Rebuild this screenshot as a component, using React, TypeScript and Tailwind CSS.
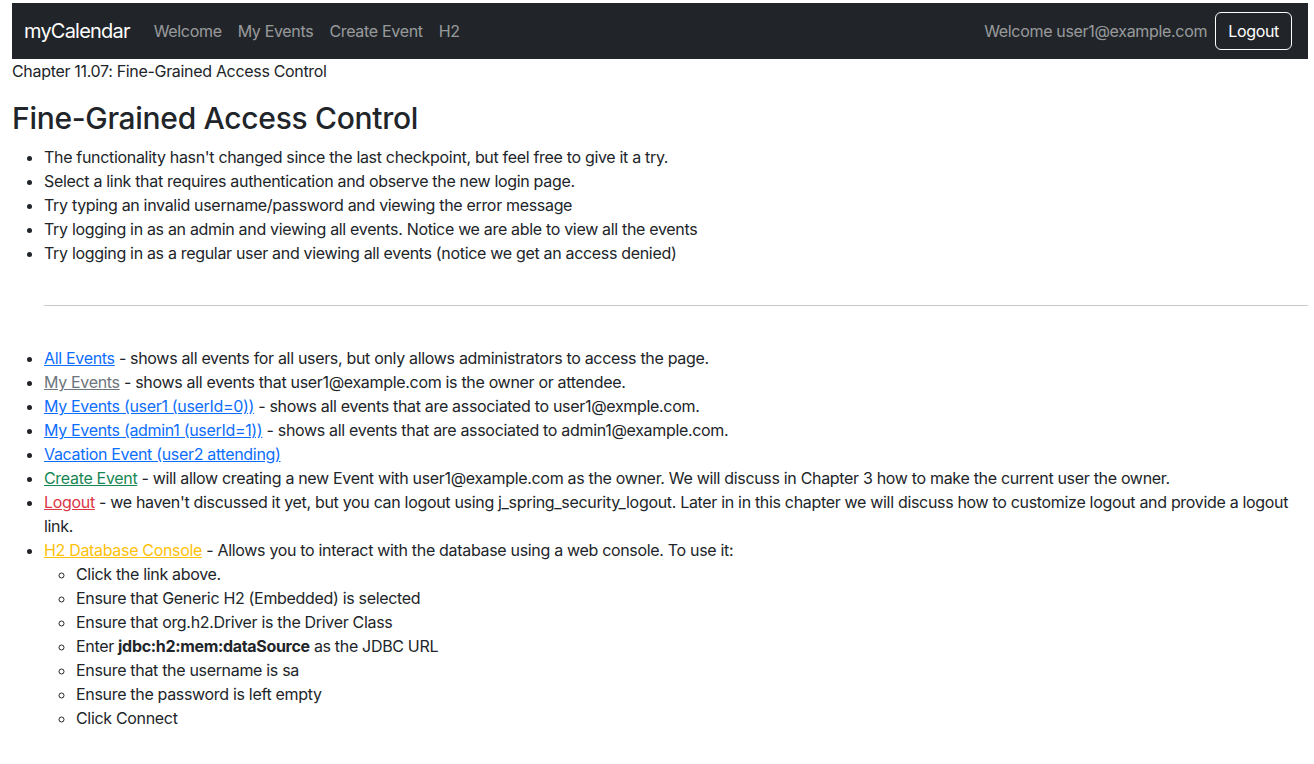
const font = { fontFamily: '"Inter", "Noto Sans", sans-serif' };

export default function App() {
  return (
    <div className="px-3 pt-[3px] text-[16px] leading-6 tracking-[-0.02em] text-[#212529]" style={font}>
      <nav className="mr-[-6px] flex h-14 items-center justify-between bg-[#212529] pl-3 pr-4">
        <div className="flex items-center">
          <a className="mr-4 text-[20px] leading-[30px] tracking-[-0.04em] text-white">myCalendar</a>
          <a className="px-2 text-[#ffffff8c]">Welcome</a>
          <a className="px-2 text-[#ffffff8c]">My Events</a>
          <a className="px-2 text-[#ffffff8c]">Create Event</a>
          <a className="px-2 text-[#ffffff8c]">H2</a>
        </div>
        <div className="flex items-center">
          <span className="mr-2 text-[#ffffff8c]">Welcome user1@example.com</span>
          <button className="h-[38px] rounded-md border border-white px-3 text-white">Logout</button>
        </div>
      </nav>
      <div className="mr-[-6px]">
        <p className="mb-4">Chapter 11.07: Fine-Grained Access Control</p>
        <h1 className="mb-2 text-[30px] font-medium leading-[38px] tracking-[-0.01em]">Fine-Grained Access Control</h1>
        <ul className="list-disc pl-8">
          <li>The functionality hasn't changed since the last checkpoint, but feel free to give it a try.</li>
          <li>Select a link that requires authentication and observe the new login page.</li>
          <li>Try typing an invalid username/password and viewing the error message</li>
          <li>Try logging in as an admin and viewing all events. Notice we are able to view all the events</li>
          <li>Try logging in as a regular user and viewing all events (notice we get an access denied)</li>
        </ul>
        <div className="pl-8">
          <hr className="my-10 border-t border-[#c8c8c8]" />
        </div>
        <ul className="list-disc pl-8">
          <li>
            <a className="text-[#0d6efd] underline">All Events</a> - shows all events for all users, but only allows administrators to access the page.
          </li>
          <li>
            <a className="text-[#6c757d] underline">My Events</a> - shows all events that user1@example.com is the owner or attendee.
          </li>
          <li>
            <a className="text-[#0d6efd] underline">My Events (user1 (userId=0))</a> - shows all events that are associated to user1@exmple.com.
          </li>
          <li>
            <a className="text-[#0d6efd] underline">My Events (admin1 (userId=1))</a> - shows all events that are associated to admin1@example.com.
          </li>
          <li>
            <a className="text-[#0d6efd] underline">Vacation Event (user2 attending)</a>
          </li>
          <li>
            <a className="text-[#198754] underline">Create Event</a> - will allow creating a new Event with user1@example.com as the owner. We will discuss in Chapter 3 how to make the current user the owner.
          </li>
          <li>
            <a className="text-[#dc3545] underline">Logout</a> - we haven't discussed it yet, but you can logout using j_spring_security_logout. Later in in this chapter we will discuss how to customize logout and provide a logout link.
          </li>
          <li>
            <a className="text-[#ffc107] underline">H2 Database Console</a> - Allows you to interact with the database using a web console. To use it:
            <ul className="list-[circle] pl-8">
              <li>Click the link above.</li>
              <li>Ensure that Generic H2 (Embedded) is selected</li>
              <li>Ensure that org.h2.Driver is the Driver Class</li>
              <li>
                Enter <b className="font-bold">jdbc:h2:mem:dataSource</b> as the JDBC URL
              </li>
              <li>Ensure that the username is sa</li>
              <li>Ensure the password is left empty</li>
              <li>Click Connect</li>
            </ul>
          </li>
        </ul>
      </div>
    </div>
  );
}
